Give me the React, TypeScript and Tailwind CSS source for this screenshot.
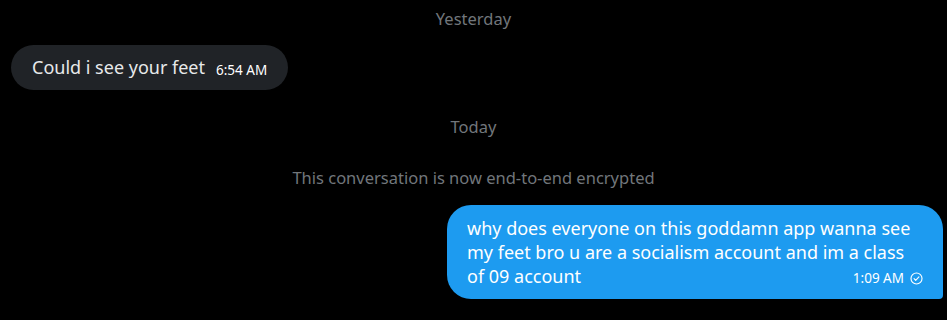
export default function App() {
  return (
    <div
      className="w-[947px] h-[320px] bg-black text-[#e7e9ea] overflow-hidden"
      style={{ fontFamily: '"Noto Sans", "Open Sans", sans-serif' }}
    >
      <div className="h-[39px] flex items-center justify-center text-[16.5px] text-[#71767b]">
        Yesterday
      </div>

      <div className="pl-[11px] pt-[6px]">
        <div className="inline-flex items-end gap-[11px] h-[45px] pl-[21px] pr-[21px] pb-[11px] rounded-[24px] bg-[#202327]">
          <span className="text-[18px] leading-[23px]">Could i see your feet</span>
          <span className="text-[13.5px] leading-[18px] text-white">6:54 AM</span>
        </div>
      </div>

      <div className="h-[74px] pt-[17px] flex items-start justify-center">
        <span className="text-[16.5px] leading-[40px] text-[#71767b]">Today</span>
      </div>

      <div className="h-[28px] flex items-center justify-center text-[16.5px] text-[#71767b]">
        This conversation is now end-to-end encrypted
      </div>

      <div className="flex justify-end pr-[4px] pt-[13px]">
        <div className="w-[496px] px-[20px] py-[11px] rounded-[24px] rounded-br-[4px] bg-[#1d9bf0] text-white">
          <div className="text-[18px] leading-[24px]">
            why does everyone on this goddamn app wanna see
            <br />
            my feet bro u are a socialism account and im a class
          </div>
          <div className="flex items-end justify-between">
            <span className="text-[18px] leading-[24px]">of 09 account</span>
            <span className="flex items-center gap-[6px] text-[13.5px] leading-[18px] pb-[1px]">
              1:09 AM
              <svg width="13" height="13" viewBox="0 0 16 16" fill="none" stroke="currentColor" strokeWidth="1.4">
                <circle cx="8" cy="8" r="6.8" />
                <path d="M5 8.2l2 2 4-4.2" strokeLinecap="round" strokeLinejoin="round" />
              </svg>
            </span>
          </div>
        </div>
      </div>
    </div>
  );
}
